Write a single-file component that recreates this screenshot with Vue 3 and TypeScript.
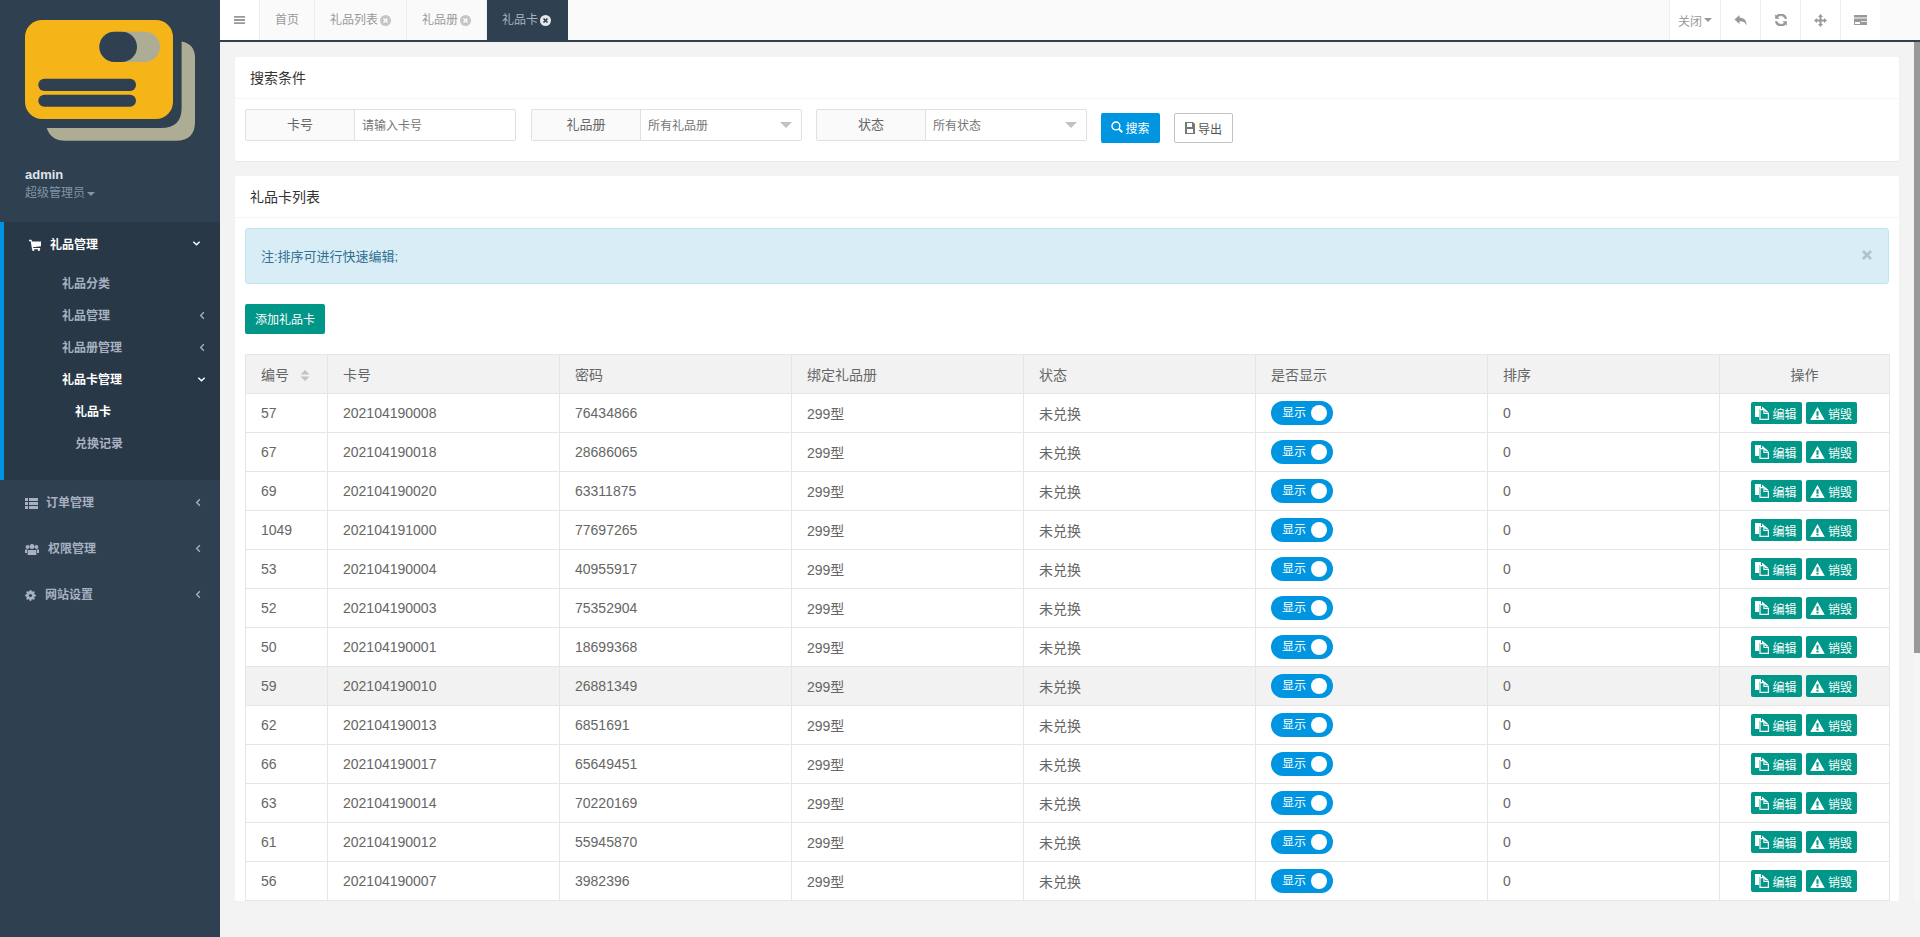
<script setup lang="ts">
const rows: [string, string, string][] = [
  ['57', '202104190008', '76434866'],
  ['67', '202104190018', '28686065'],
  ['69', '202104190020', '63311875'],
  ['1049', '202104191000', '77697265'],
  ['53', '202104190004', '40955917'],
  ['52', '202104190003', '75352904'],
  ['50', '202104190001', '18699368'],
  ['59', '202104190010', '26881349'],
  ['62', '202104190013', '6851691'],
  ['66', '202104190017', '65649451'],
  ['63', '202104190014', '70220169'],
  ['61', '202104190012', '55945870'],
  ['56', '202104190007', '3982396'],
]
</script>

<template>
  <div class="app">
    <aside class="side">
      <div class="logo-wrap">
        <svg class="logo" width="188" height="125" viewBox="0 0 188 125">
          <path d="M21.700 108 H136 Q156.600 108 156.600 88 V21.600 Q170 24 170 38 V102 Q170 120.700 151 120.700 H40 Q26 120.700 21.700 108 Z" fill="#adad95" />
          <rect x="0" y="0" width="148" height="99" rx="17" fill="#f5b418" />
          <rect x="74.300" y="11.700" width="60.700" height="30.300" rx="15.150" fill="#adad95" />
          <rect x="74.300" y="11.700" width="37.700" height="30.300" rx="15.150" fill="#2f4050" />
          <rect x="13.300" y="58.700" width="97.700" height="12.300" rx="6" fill="#2f4050" />
          <rect x="13.300" y="74.700" width="97.700" height="12" rx="6" fill="#2f4050" />
        </svg>
        <div class="admin">admin</div>
        <div class="role">超级管理员<i class="caret"></i></div>
      </div>
      <nav>
        <div class="active-block">
          <div class="top top-active">
            <svg class="ico" viewBox="0 0 14 14" width="12" height="12"><path d="M0 1H3L3.500 3H14V8.500L4.500 9.500L4.800 10.500H13V12H3.500L2 2.500H0Z" fill="#fff" /><circle cx="5" cy="12.700" r="1.300" fill="#fff" /><circle cx="11.500" cy="12.700" r="1.300" fill="#fff" /></svg>
            <span class="label">礼品管理</span>
            <svg class="chev chev-open" viewBox="0 0 10 10" width="9" height="9"><path d="M1.500 3L5 6.500L8.500 3" fill="none" stroke="#fff" stroke-width="1.600" /></svg>
          </div>
          <div class="sub sub-first">礼品分类</div>
          <div class="sub">礼品管理<svg class="chev sub-chev" viewBox="0 0 10 10" width="9" height="9"><path d="M6.500 1.500L3 5L6.500 8.500" fill="none" stroke="#a7b1c2" stroke-width="1.500" /></svg></div>
          <div class="sub">礼品册管理<svg class="chev sub-chev" viewBox="0 0 10 10" width="9" height="9"><path d="M6.500 1.500L3 5L6.500 8.500" fill="none" stroke="#a7b1c2" stroke-width="1.500" /></svg></div>
          <div class="sub sub-on">礼品卡管理<svg class="chev sub-chev-open" viewBox="0 0 10 10" width="9" height="9"><path d="M1.500 3L5 6.500L8.500 3" fill="none" stroke="#fff" stroke-width="1.600" /></svg></div>
          <div class="third third-on">礼品卡</div>
          <div class="third">兑换记录</div>
        </div>
        <div class="top">
          <svg class="ico" viewBox="0 0 13 11" width="13" height="11"><path d="M0 0H3V3H0ZM4 0H13V3H4ZM0 4H3V7H0ZM4 4H13V7H4ZM0 8H3V11H0ZM4 8H13V11H4Z" fill="#a7b1c2" /></svg>
          <span class="label">订单管理</span>
          <svg class="chev" viewBox="0 0 10 10" width="9" height="9"><path d="M6.500 1.500L3 5L6.500 8.500" fill="none" stroke="#a7b1c2" stroke-width="1.500" /></svg>
        </div>
        <div class="top">
          <svg class="ico ico-u" viewBox="0 0 14 11" width="14" height="11"><circle cx="7" cy="2.500" r="2.500" fill="#a7b1c2" /><circle cx="2.500" cy="3" r="1.900" fill="#a7b1c2" /><circle cx="11.500" cy="3" r="1.900" fill="#a7b1c2" /><path d="M3 6H11L11.500 11H2.500ZM0 5.500H2.500L2 9H0ZM11.500 5.500H14V9H12Z" fill="#a7b1c2" /></svg>
          <span class="label">权限管理</span>
          <svg class="chev" viewBox="0 0 10 10" width="9" height="9"><path d="M6.500 1.500L3 5L6.500 8.500" fill="none" stroke="#a7b1c2" stroke-width="1.500" /></svg>
        </div>
        <div class="top">
          <svg class="ico ico-g" viewBox="0 0 12 12" width="11" height="11"><circle cx="6" cy="6" r="3.500" fill="none" stroke="#a7b1c2" stroke-width="2.600" /><path d="M6 0V12M0 6H12M1.800 1.800L10.200 10.200M10.200 1.800L1.800 10.200" stroke="#a7b1c2" stroke-width="1.800" /><circle cx="6" cy="6" r="1.700" fill="#2f4050" /></svg>
          <span class="label">网站设置</span>
          <svg class="chev" viewBox="0 0 10 10" width="9" height="9"><path d="M6.500 1.500L3 5L6.500 8.500" fill="none" stroke="#a7b1c2" stroke-width="1.500" /></svg>
        </div>
      </nav>
    </aside>

    <div class="main">
      <header class="tabs">
        <div class="burger"><svg viewBox="0 0 11 8" width="11" height="8"><path d="M0 0H11V1.800H0ZM0 3.100H11V4.900H0ZM0 6.200H11V8H0Z" fill="#999" /></svg></div>
        <div class="tab">首页</div>
        <div class="tab">礼品列表<i class="x"><svg viewBox="0 0 10 10" width="11" height="11"><circle cx="5" cy="5" r="5" fill="#c5c5c5" /><path d="M3.200 3.200L6.800 6.800M6.800 3.200L3.200 6.800" stroke="#fafafa" stroke-width="1.500" /></svg></i></div>
        <div class="tab">礼品册<i class="x"><svg viewBox="0 0 10 10" width="11" height="11"><circle cx="5" cy="5" r="5" fill="#c5c5c5" /><path d="M3.200 3.200L6.800 6.800M6.800 3.200L3.200 6.800" stroke="#fafafa" stroke-width="1.500" /></svg></i></div>
        <div class="tab tab-on">礼品卡<i class="x"><svg viewBox="0 0 10 10" width="11" height="11"><circle cx="5" cy="5" r="5" fill="#e5e8ea" /><path d="M3.200 3.200L6.800 6.800M6.800 3.200L3.200 6.800" stroke="#2f4050" stroke-width="1.500" /></svg></i></div>
        <div class="spacer"></div>
        <div class="tool tool-close">关闭<i class="caret caret-close"></i></div>
        <div class="tool"><svg viewBox="0 0 13 12" width="13" height="12"><path d="M5.500 1V3.700C10 3.700 12.600 6 12.600 11.500C11.500 8.800 9.500 7.300 5.500 7.300V10L0.500 5.500Z" fill="#999" /></svg></div>
        <div class="tool"><svg viewBox="0 0 12 12" width="12" height="12"><path d="M9.800 4.600A4.100 4.100 0 0 0 2.700 3.200L4 4.500H0.300V0.800L1.300 1.800A6 6 0 0 1 11.800 4.600ZM2.200 7.400A4.100 4.100 0 0 0 9.300 8.800L8 7.500H11.700V11.200L10.700 10.200A6 6 0 0 1 0.200 7.400Z" fill="#999" stroke="#999" stroke-width=".6" /></svg></div>
        <div class="tool"><svg viewBox="0 0 13 13" width="13" height="13"><path d="M6.500 0L9 3H7.500V5.500H10V4L13 6.500L10 9V7.500H7.500V10H9L6.500 13L4 10H5.500V7.500H3V9L0 6.500L3 4V5.500H5.500V3H4Z" fill="#999" /></svg></div>
        <div class="tool"><svg viewBox="0 0 13 10" width="13" height="10"><path d="M0 0H13V2.500H0ZM0 3.500H13V6H7V6.800H13V10H0ZM1 7V9H6V7Z" fill="#999" fill-rule="evenodd" /></svg></div>
        <div class="tool-pad"></div>
      </header>

      <div class="content">
        <section class="card search-card">
          <div class="card-title">搜索条件</div>
          <div class="search-body">
            <div class="group">
              <span class="addon">卡号</span>
              <span class="field placeholder">请输入卡号</span>
            </div>
            <div class="group">
              <span class="addon">礼品册</span>
              <span class="field">所有礼品册<i class="sel-arrow"></i></span>
            </div>
            <div class="group">
              <span class="addon">状态</span>
              <span class="field">所有状态<i class="sel-arrow"></i></span>
            </div>
            <button class="btn-search">
              <svg viewBox="0 0 11 11" width="12" height="12"><circle cx="4.500" cy="4.500" r="3.600" fill="none" stroke="#fff" stroke-width="1.300" /><path d="M7.200 7.200L10.300 10.300" stroke="#fff" stroke-width="1.800" /></svg>
              搜索
            </button>
            <button class="btn-export">
              <svg viewBox="0 0 10 12" width="10" height="12"><path d="M0 0H8L10 2V12H0ZM2 1V5H7V1ZM2 7V11H8V7Z" fill="#777" fill-rule="evenodd" /></svg>
              导出
            </button>
          </div>
        </section>

        <section class="card list-card">
          <div class="card-title">礼品卡列表</div>
          <div class="list-body">
            <div class="alert">
              <span>注:排序可进行快速编辑;</span>
              <svg class="alert-x" viewBox="0 0 10 10" width="10" height="10"><path d="M1 1L9 9M9 1L1 9" stroke="#b0c2cc" stroke-width="2.600" /></svg>
            </div>
            <button class="btn-add">添加礼品卡</button>
            <table class="grid">
              <colgroup>
                <col class="c-id" />
                <col class="c-w" />
                <col class="c-w" />
                <col class="c-w" />
                <col class="c-w" />
                <col class="c-w" />
                <col class="c-w" />
                <col class="c-op" />
              </colgroup>
              <thead>
                <tr>
                  <th>编号<svg class="sort" viewBox="0 0 10 13" width="10" height="13"><path d="M5 1L9.500 5.500H0.500ZM5 12L0.500 7.500H9.500Z" fill="#c2c2c2" /></svg></th>
                  <th>卡号</th>
                  <th>密码</th>
                  <th>绑定礼品册</th>
                  <th>状态</th>
                  <th>是否显示</th>
                  <th>排序</th>
                  <th class="center">操作</th>
                </tr>
              </thead>
              <tbody>
                <tr v-for="r in rows" :key="r[0]" :class="{ hover: r[0] === '59' }">
                  <td>{{ r[0] }}</td>
                  <td>{{ r[1] }}</td>
                  <td>{{ r[2] }}</td>
                  <td>299型</td>
                  <td>未兑换</td>
                  <td><span class="switch"><span class="sw-text">显示</span><i class="knob"></i></span></td>
                  <td>0</td>
                  <td class="center ops">
                    <span class="op">
                      <svg viewBox="0 0 14 14" width="14" height="14"><path d="M0 0H6V3H4V11H0Z" fill="#fff" /><path d="M5 3.600H9V7.500H13.400V13.400H5Z" fill="none" stroke="#fff" stroke-width="1.200" /><path d="M7 0.500L7 3H8L11 6.500H14L7 0.500Z" fill="#fff" /></svg>编辑
                    </span>
                    <span class="op">
                      <svg viewBox="0 0 14 12.500" width="15" height="13"><path fill-rule="evenodd" d="M7 0L14 12.500H0ZM6 4V8.500H8V4ZM6 9.300V11H8V9.300Z" fill="#fff" /></svg>销毁
                    </span>
                  </td>
                </tr>
              </tbody>
            </table>
          </div>
        </section>
      </div>
      <div class="scrollbar"><div class="thumb"></div></div>
    </div>
  </div>
</template>

<style>
html, body { margin: 0; height: 100%; overflow: hidden; background: #f3f3f4; }
</style>

<style scoped>
.app {
  display: flex;
  height: 937px;
  width: 1920px;
  overflow: hidden;
  font-family: "Liberation Sans", "Noto Sans CJK SC", sans-serif;
  font-size: 13px;
  color: #676a6c;
}
.side { width: 220px; flex: none; background: #2f4050; color: #a7b1c2; }
.logo-wrap { height: 222px; box-sizing: border-box; padding: 20px 0 0 25px; }
.logo { display: block; }
.admin { margin-top: 22px; font-size: 13px; font-weight: 700; color: #dfe4ed; line-height: 16px; height: 16px; }
.role { font-size: 12px; color: #8095a8; line-height: 18px; margin-top: 1px; }
.caret { display: inline-block; margin-left: 2px; vertical-align: middle; border-top: 4px solid #8095a8; border-left: 4px solid transparent; border-right: 4px solid transparent; }
.active-block { background: #293846; border-left: 4px solid #0095e0; height: 258px; box-sizing: border-box; }
.top { display: flex; align-items: center; height: 46px; padding-left: 25px; font-size: 12px; font-weight: 600; position: relative; }
.top-active { color: #fff; height: 44px; padding-top: 2px; box-sizing: border-box; font-weight: 700; }
.ico { flex: none; margin-right: 8px; }
.top-active .ico { margin-right: 9px; }
.ico-u { margin-right: 9px; }
.ico-g { margin-right: 9px; }
.label { line-height: 16px; }
.chev { position: absolute; right: 17px; top: 50%; margin-top: -5px; }
.chev-open { right: 19px; }
.sub { height: 32px; line-height: 32px; padding-left: 58px; font-size: 12px; font-weight: 600; position: relative; }
.sub-first { margin-top: 2px; }
.sub-on { color: #fff; font-weight: 700; }
.sub-chev { right: 13px; }
.sub-chev-open { position: absolute; right: 14px; top: 50%; margin-top: -5px; }
.third { height: 32px; line-height: 32px; padding-left: 71px; font-size: 12px; font-weight: 600; }
.third-on { color: #fff; font-weight: 700; }

.main { flex: 1; min-width: 0; position: relative; display: flex; flex-direction: column; }
.tabs { height: 42px; box-sizing: border-box; flex: none; display: flex; background: #fafafa; border-bottom: 2px solid #2f4050; font-size: 12px; color: #999; }
.burger { width: 40px; box-sizing: border-box; background: #fff; border-right: 1px solid #eee; display: flex; align-items: center; justify-content: center; }
.tab { padding: 0 15px; display: flex; align-items: center; border-right: 1px solid #eee; line-height: 40px; white-space: nowrap; }
.tab-on { background: #2f4050; color: #a7b1c2; border-right: 0; padding-right: 17px; }
.x { display: inline-flex; margin-left: 2px; }
.spacer { flex: 1; }
.tool { width: 40px; box-sizing: border-box; background: #fff; border-left: 1px solid #eee; display: flex; align-items: center; justify-content: center; }
.tool-close { width: 51px; color: #999; }
.caret-close { border-top-color: #999; margin-left: 2px; }
.tool-pad { width: 40px; background: #fafafa; }

.content { flex: 1; min-height: 0; padding: 15px 21px 0 15px; overflow: hidden; background: #f3f3f4; }
.card { background: #fff; border-radius: 2px; }
.search-card { height: 104px; box-shadow: 0 1px 1px #e8e8e8; }
.card-title { height: 42px; line-height: 42px; padding-left: 15px; font-size: 14px; color: #333; border-bottom: 1px solid #f6f6f6; box-sizing: border-box; }
.search-body { display: flex; align-items: flex-start; padding: 10px 10px 0; }
.group { display: flex; height: 32px; width: 271px; box-sizing: border-box; border: 1px solid #e0e0e0; border-radius: 2px; margin-right: 15px; font-size: 12px; background: #fff; }
.group:nth-child(3) { margin-right: 14px; }
.group:nth-child(2) { margin-right: 14px; }
.addon { width: 109px; box-sizing: border-box; flex: none; text-align: center; background: #fafafa; border-right: 1px solid #e0e0e0; line-height: 30px; font-size: 13px; color: #666; }
.field { flex: 1; padding-left: 7px; line-height: 32px; color: #757575; position: relative; }
.sel-arrow { position: absolute; right: 9px; top: 12px; border-top: 6px solid #c2c2c2; border-left: 6px solid transparent; border-right: 6px solid transparent; }
.btn-search { width: 59px; height: 30px; margin-top: 4px; padding: 0 0 2px; border: 0; border-radius: 2px; background: #0095e0; color: #fff; font: inherit; font-size: 12px; display: flex; align-items: center; justify-content: center; gap: 2px; }
.btn-export { width: 59px; height: 30px; margin: 4px 0 0 14px; padding: 0; border: 1px solid #c2c2c2; border-radius: 2px; background: #fff; color: #555; font: inherit; font-size: 12px; display: flex; align-items: center; justify-content: center; gap: 3px; }

.list-card { margin-top: 15px; }
.list-body { padding: 10px 10px 0; }
.alert { height: 56px; box-sizing: border-box; background: #d9edf7; border: 1px solid #bce8f1; border-radius: 3px; padding: 0 15px 2px; display: flex; align-items: center; justify-content: space-between; font-size: 13px; color: #31708f; }
.alert-x { margin-right: 1px; }
.btn-add { display: block; width: 80px; height: 30px; margin-top: 20px; padding: 0 0 2px; border: 0; border-radius: 2px; background: #009688; color: #fff; font: inherit; font-size: 12px; }

.grid { width: 1644px; table-layout: fixed; border-collapse: collapse; margin-top: 20px; font-size: 14px; color: #666; }
.c-id { width: 82px; }
.c-w { width: 232px; }
.c-op { width: 170px; }
.grid th, .grid td { border: 1px solid #e6e6e6; height: 39px; box-sizing: border-box; padding: 0 15px; text-align: left; font-weight: 400; white-space: nowrap; }
.grid th { background: #f2f2f2; }
.grid .center { text-align: center; }
.grid .ops { padding: 0 16px 0 14px; }
.grid tr.hover td { background: #f2f2f2; }
.sort { margin-left: 11px; vertical-align: -2px; }
.switch { display: inline-block; width: 62px; height: 24px; border-radius: 12px; background: #0095e0; color: #fff; font-size: 12px; position: relative; vertical-align: middle; }
.sw-text { position: absolute; left: 11px; top: 0; line-height: 24px; }
.knob { position: absolute; right: 6px; top: 4px; width: 16px; height: 16px; border-radius: 50%; background: #fff; }
.ops { font-size: 0; }
.op { display: inline-flex; align-items: center; justify-content: center; gap: 3px; height: 22px; width: 51px; margin: 0 2px; padding: 0; border-radius: 2px; background: #009688; color: #fff; font-size: 12px; vertical-align: middle; }
.op svg { flex: none; }
.scrollbar { position: absolute; right: 0; top: 42px; bottom: 36px; width: 6px; background: #f6f6f6; }
.thumb { height: 611px; background: #999; }
</style>
